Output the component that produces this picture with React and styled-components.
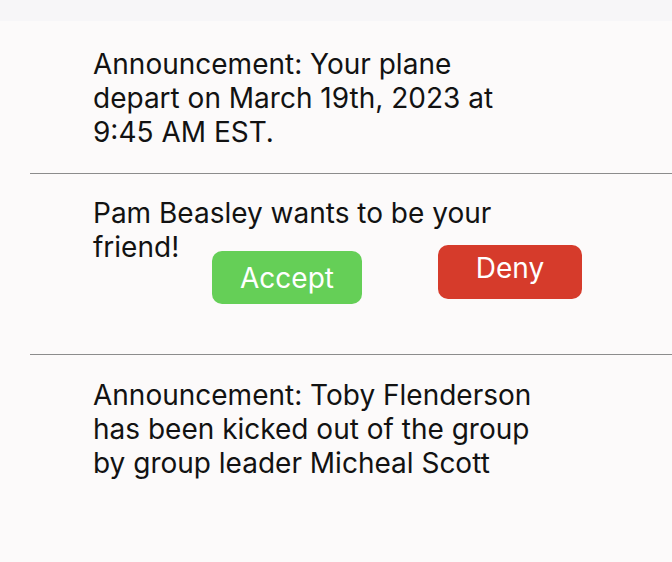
import React from "react";
import styled, { createGlobalStyle } from "styled-components";

const Global = createGlobalStyle`
  html, body { margin: 0; padding: 0; background: #fcfafa; }
  body { font-family: Inter, "Noto Sans", sans-serif; color: #111; }
`;

const Page = styled.div`
  width: 672px;
  min-height: 562px;
  background: #fcfafa;
  display: flex;
  flex-direction: column;
`;

const TopBand = styled.div`
  height: 21px;
  background: #f7f6f8;
`;

const Item = styled.section`
  height: ${(p) => p.$h}px;
  box-sizing: border-box;
  padding: ${(p) => p.$top}px 0 0 93px;
`;

const Message = styled.p`
  margin: 0;
  width: 445px;
  font-size: 28px;
  line-height: 34px;
  font-weight: 400;
  color: #121212;
`;

const Divider = styled.hr`
  margin: 0 0 0 30px;
  border: 0;
  border-top: 1px solid #8c8c8c;
  height: 0;
`;

const RequestRow = styled.div`
  display: flex;
  align-items: flex-start;
`;

const RequestTail = styled.span`
  width: 119px;
  flex: none;
  font-size: 28px;
  line-height: 34px;
  color: #121212;
`;

const ActionButton = styled.button`
  flex: none;
  width: ${(p) => p.$w}px;
  height: ${(p) => p.$hgt}px;
  margin: ${(p) => p.$mt}px 0 0 ${(p) => p.$ml}px;
  border: 0;
  border-radius: 10px;
  background: ${(p) => p.$bg};
  color: #fff;
  font-family: Inter, "Noto Sans", sans-serif;
  font-size: 28px;
  line-height: 1;
  display: flex;
  align-items: center;
  justify-content: center;
  padding: 0 0 ${(p) => p.$pb}px 0;
  box-sizing: border-box;
  cursor: pointer;
`;

export default function App() {
  return (
    <Page>
      <Global />
      <TopBand />
      <Item $h={152} $top={26}>
        <Message>
          Announcement: Your plane depart on March 19th, 2023 at 9:45 AM EST.
        </Message>
      </Item>
      <Divider />
      <Item $h={180} $top={22}>
        <Message>Pam Beasley wants to be your</Message>
        <RequestRow>
          <RequestTail>friend!</RequestTail>
          <ActionButton $w={150} $hgt={53} $mt={21} $ml={0} $pb={0} $bg="#65cf57">
            Accept
          </ActionButton>
          <ActionButton $w={144} $hgt={54} $mt={15} $ml={76} $pb={8} $bg="#d63b2b">
            Deny
          </ActionButton>
        </RequestRow>
      </Item>
      <Divider />
      <Item $h={207} $top={23}>
        <Message>
          Announcement: Toby Flenderson has been kicked out of the group by
          group leader Micheal Scott
        </Message>
      </Item>
    </Page>
  );
}
